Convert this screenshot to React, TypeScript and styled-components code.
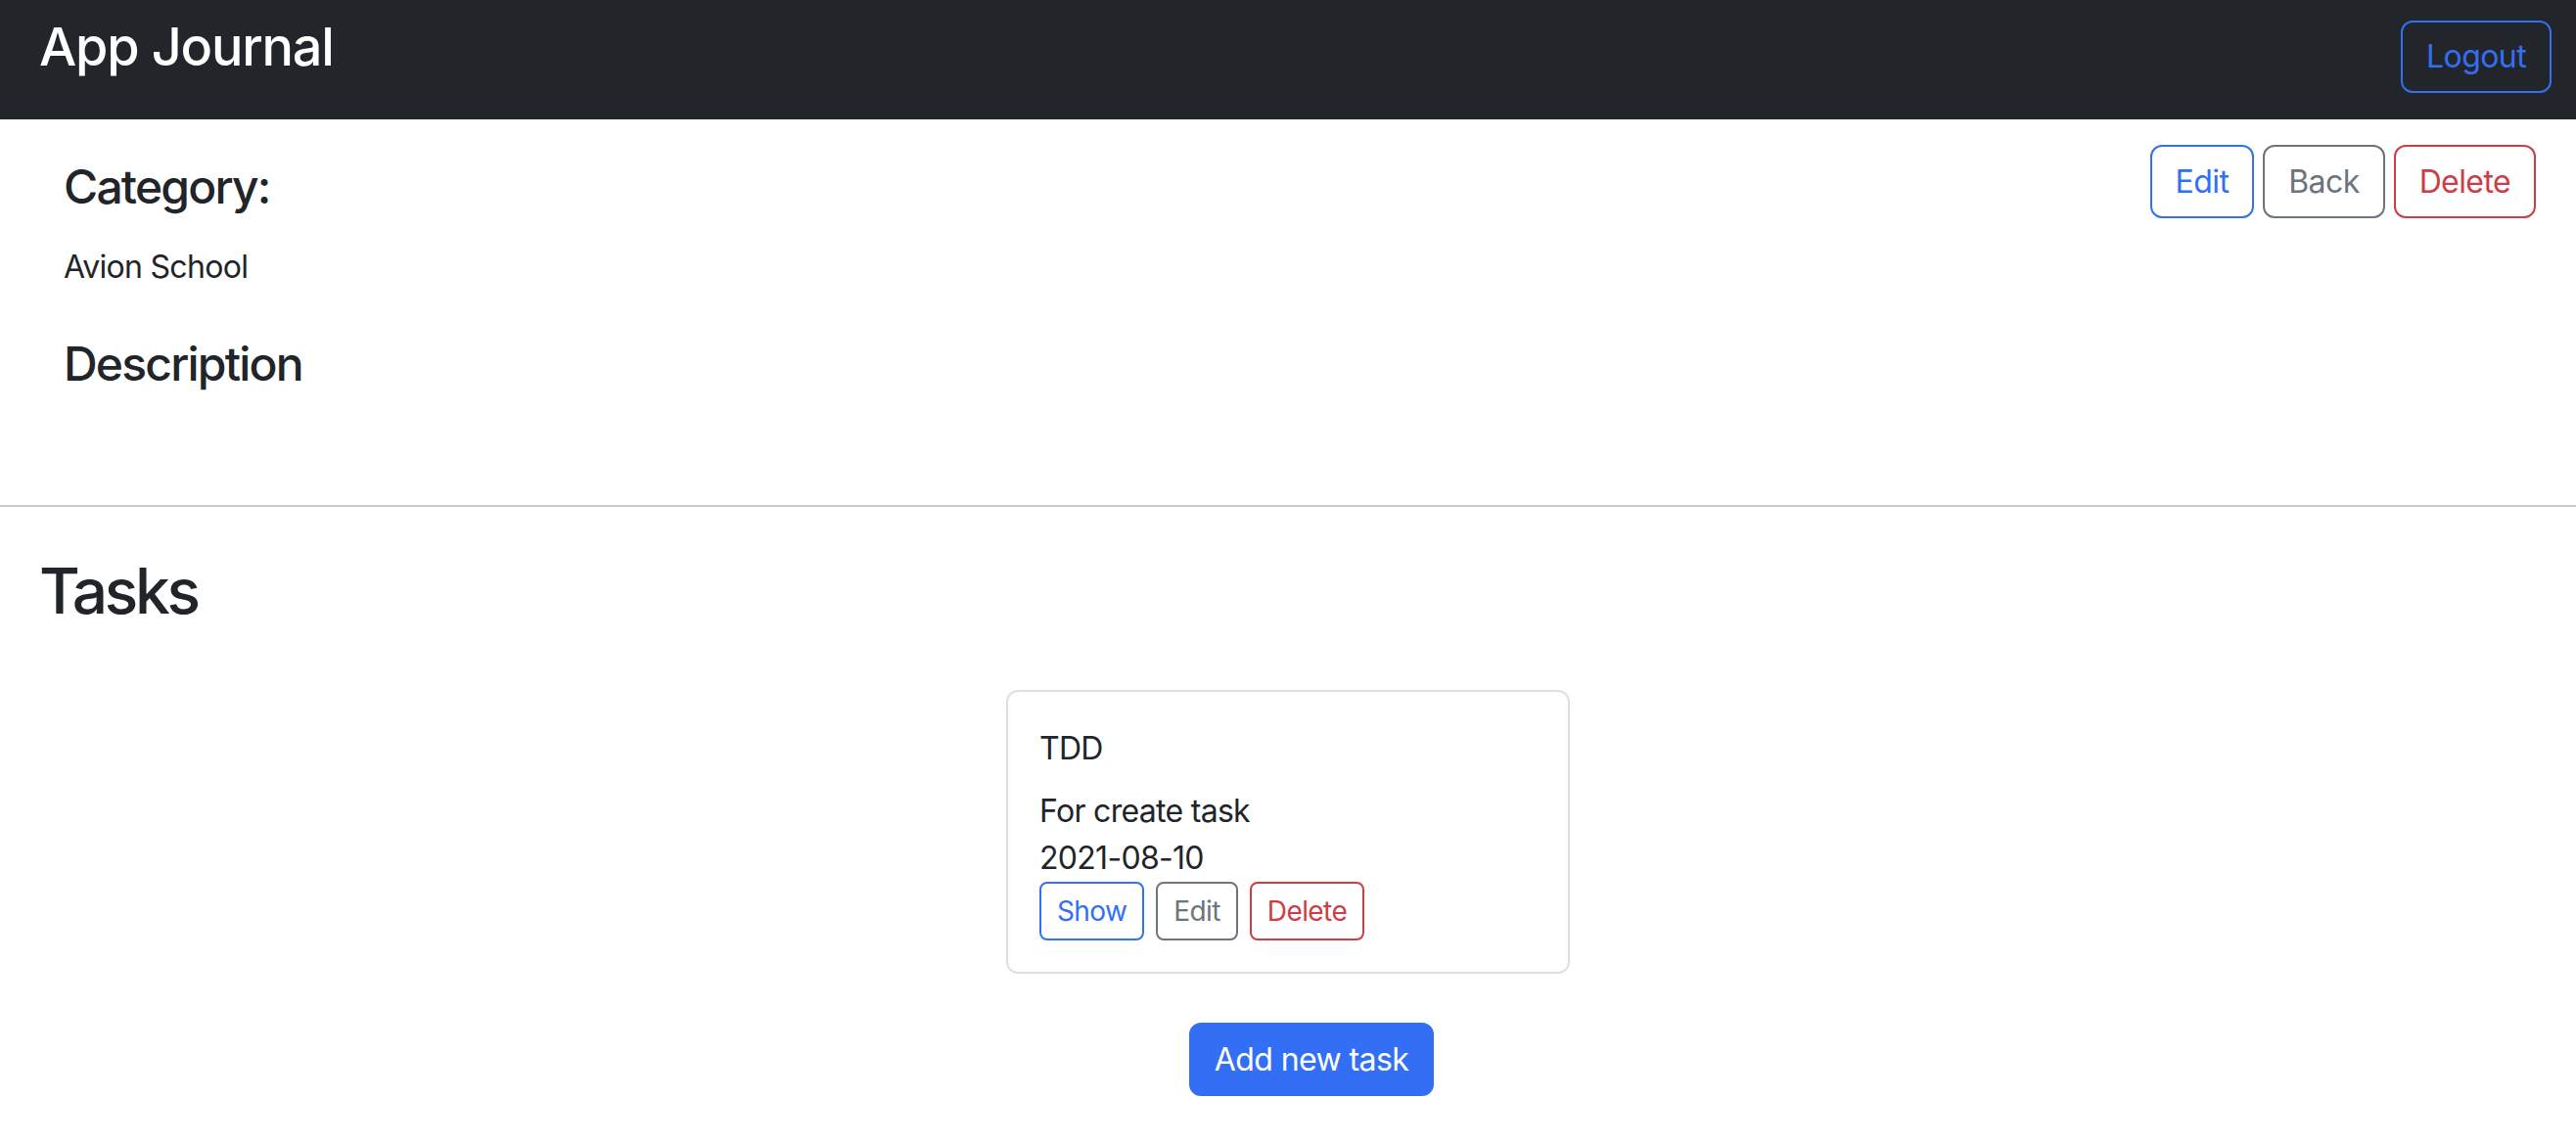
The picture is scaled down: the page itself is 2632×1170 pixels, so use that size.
import React from "react";
import styled, { createGlobalStyle, css } from "styled-components";

const GlobalStyle = createGlobalStyle`
  * { box-sizing: border-box; }
  body {
    margin: 0;
    background: #ffffff;
    color: #212529;
    font-family: Inter, "Noto Sans", "Liberation Sans", sans-serif;
    font-size: 32px;
    line-height: 1.5;
    letter-spacing: -0.7px;
  }
`;

const palette = {
  primary: "#336ff4",
  secondary: "#6c747c",
  danger: "#cc3d45",
};

type Variant = keyof typeof palette;

const Page = styled.div`
  display: flex;
  flex-direction: column;
  min-height: 1170px;
`;

const Navbar = styled.nav`
  height: 122px;
  background: #222529;
  display: flex;
  justify-content: space-between;
  align-items: flex-start;
  padding: 0 25px 0 40px;
`;

const Brand = styled.div`
  margin-top: 16px;
  color: #ffffff;
  font-size: 54px;
  font-weight: 500;
  line-height: 1.2;
  letter-spacing: -1.2px;
`;

const Button = styled.button<{ $variant: Variant; $size?: "sm" | "md"; $solid?: boolean }>`
  font-family: inherit;
  font-weight: 400;
  letter-spacing: -0.6px;
  background: transparent;
  border: 2px solid ${(p) => palette[p.$variant]};
  color: ${(p) => palette[p.$variant]};
  cursor: pointer;
  ${(p) =>
    p.$size === "sm"
      ? css`
          font-size: 28px;
          line-height: 40px;
          padding: 8px 16px;
          border-radius: 8px;
        `
      : css`
          font-size: 32px;
          line-height: 47px;
          padding: 12px 24px;
          border-radius: 12px;
        `}
  ${(p) =>
    p.$solid &&
    css`
      background: ${palette[p.$variant]};
      color: #ffffff;
    `}
`;

const LogoutButton = styled(Button)`
  margin-top: 21px;
  line-height: 46px;
`;

const Detail = styled.section`
  display: flex;
  justify-content: space-between;
  align-items: flex-start;
  padding: 26px 41px 0 65px;
`;

const DetailText = styled.div`
  display: flex;
  flex-direction: column;
  padding-top: 14px;
`;

const SubHeading = styled.h4`
  margin: 0;
  font-size: 48px;
  font-weight: 500;
  line-height: 1.2;
  letter-spacing: -1.8px;
`;

const DetailValue = styled.p`
  margin: 29px 0 46px;
`;

const ActionGroup = styled.div<{ $gap: number }>`
  display: flex;
  gap: ${(p) => p.$gap}px;
`;

const Divider = styled.hr`
  margin: 116px 0 0;
  border: 0;
  border-top: 2px solid #c9cacb;
`;

const TasksSection = styled.section`
  display: flex;
  flex-direction: column;
  padding: 0 40px;
`;

const TasksHeading = styled.h2`
  margin: 48px 0 0;
  font-size: 64px;
  font-weight: 500;
  line-height: 1.2;
  letter-spacing: -3.3px;
`;

const TaskList = styled.div`
  display: flex;
  justify-content: center;
  margin-top: 62px;
`;

const TaskCard = styled.div`
  width: 576px;
  border: 2px solid #dedfe0;
  border-radius: 12px;
  padding: 32px;
  display: flex;
  flex-direction: column;
`;

const TaskTitle = styled.div`
  margin: 2px 0 16px;
`;

const TaskLine = styled.div``;

const AddRow = styled.div`
  display: flex;
  justify-content: center;
  padding-left: 48px;
  margin-top: 50px;
`;

export default function App() {
  return (
    <Page>
      <GlobalStyle />
      <Navbar>
        <Brand>App Journal</Brand>
        <LogoutButton $variant="primary">Logout</LogoutButton>
      </Navbar>

      <Detail>
        <DetailText>
          <SubHeading>Category:</SubHeading>
          <DetailValue>Avion School</DetailValue>
          <SubHeading>Description</SubHeading>
        </DetailText>
        <ActionGroup $gap={9}>
          <Button $variant="primary">Edit</Button>
          <Button $variant="secondary">Back</Button>
          <Button $variant="danger">Delete</Button>
        </ActionGroup>
      </Detail>

      <Divider />

      <TasksSection>
        <TasksHeading>Tasks</TasksHeading>
        <TaskList>
          <TaskCard>
            <TaskTitle>TDD</TaskTitle>
            <TaskLine>For create task</TaskLine>
            <TaskLine>2021-08-10</TaskLine>
            <ActionGroup $gap={12}>
              <Button $variant="primary" $size="sm">Show</Button>
              <Button $variant="secondary" $size="sm">Edit</Button>
              <Button $variant="danger" $size="sm">Delete</Button>
            </ActionGroup>
          </TaskCard>
        </TaskList>
        <AddRow>
          <Button $variant="primary" $solid>Add new task</Button>
        </AddRow>
      </TasksSection>
    </Page>
  );
}
